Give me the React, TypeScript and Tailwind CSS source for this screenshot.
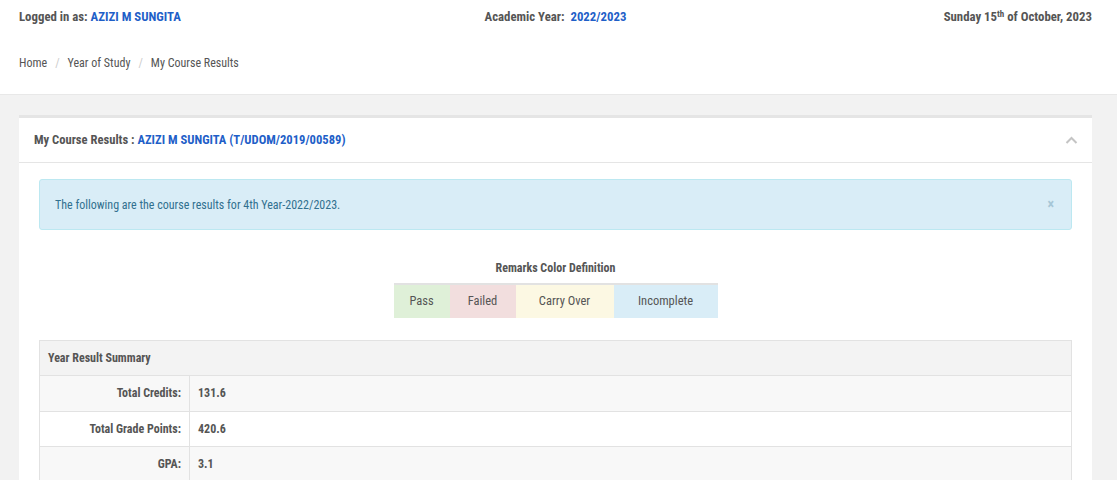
import React from 'react';

const font = { fontFamily: '"Liberation Sans Narrow", "Roboto Condensed", "Liberation Sans", sans-serif' };

const summary = [
  { label: 'Total Credits:', value: '131.6' },
  { label: 'Total Grade Points:', value: '420.6' },
  { label: 'GPA:', value: '3.1' },
];

const App: React.FC = () => {
  return (
    <div className="min-h-screen bg-[#f2f2f2] text-[#555]" style={font}>
      {/* Top bar + breadcrumb */}
      <div className="bg-white h-[95px] pl-[19px] pr-[25px] border-b border-[#e8e8e8]">
        <div className="grid grid-cols-3 items-center h-[34px] text-[12.8px] font-bold">
          <div>
            Logged in as: <span className="text-[#1f5fc8]">AZIZI M SUNGITA</span>
          </div>
          <div className="text-center">
            Academic Year:&nbsp; <span className="text-[#1f5fc8]">2022/2023</span>
          </div>
          <div className="text-right">
            Sunday 15<sup className="text-[9px]">th</sup> of October, 2023
          </div>
        </div>
        <div className="flex items-center gap-[8px] mt-[20px] text-[12px] text-[#555]">
          <span>Home</span>
          <span className="text-[#ccc]">/</span>
          <span>Year of Study</span>
          <span className="text-[#ccc]">/</span>
          <span>My Course Results</span>
        </div>
      </div>

      {/* Panel */}
      <div className="pl-[19px] pt-[20px] pr-[25px]">
        <div className="bg-white border-t-[3px] border-[#e5e5e5]">
          <div className="flex items-center justify-between h-[45px] pl-[15px] pr-[14px] border-b border-[#e5e5e5]">
            <div className="text-[12.6px] font-bold">
              My Course Results : <span className="text-[#1f5fc8]">AZIZI M SUNGITA (T/UDOM/2019/00589)</span>
            </div>
            <svg width="13" height="9" viewBox="0 0 13 9">
              <path d="M1.5 7 L6.5 2 L11.5 7" fill="none" stroke="#c4c4c4" strokeWidth="2" />
            </svg>
          </div>

          <div className="px-[20px] pt-[16px]">
            <div className="flex items-center justify-between h-[51px] px-[15px] bg-[#d9edf7] border border-[#bce8f1] rounded-[3px] text-[#31708f] text-[12px]">
              <span>The following are the course results for 4th Year-2022/2023.</span>
              <span className="text-[#a6c6d6] font-bold text-[14px] mr-[2px]">×</span>
            </div>

            <div className="mt-[29px] text-center text-[12px] font-bold">Remarks Color Definition</div>
            <div className="flex justify-center mt-[6px]">
              <div className="flex border-t-2 border-[#e2e2e2] text-[12.5px] h-[35px]">
                <div className="w-[56px] bg-[#dff0d8] flex items-center justify-center">Pass</div>
                <div className="w-[66px] bg-[#f2dede] flex items-center justify-center">Failed</div>
                <div className="w-[98px] bg-[#fcf8e3] flex items-center justify-center">Carry Over</div>
                <div className="w-[104px] bg-[#d9edf7] flex items-center justify-center">Incomplete</div>
              </div>
            </div>

            <div className="mt-[22px] border border-[#e2e2e2] text-[12px] font-bold">
              <div className="h-[35px] flex items-center px-[8px] bg-[#f3f3f3] border-b border-[#e2e2e2]">
                Year Result Summary
              </div>
              {summary.map((row, i) => (
                <div
                  key={row.label}
                  className={`grid grid-cols-[150px_1fr] h-[35.5px] border-b border-[#e2e2e2] ${i % 2 === 0 ? 'bg-[#f8f8f8]' : 'bg-white'}`}
                >
                  <div className="flex items-center justify-end pr-[8px] border-r border-[#e2e2e2]">{row.label}</div>
                  <div className="flex items-center pl-[8px]">{row.value}</div>
                </div>
              ))}
            </div>
          </div>
        </div>
      </div>
    </div>
  );
};

export default App;
